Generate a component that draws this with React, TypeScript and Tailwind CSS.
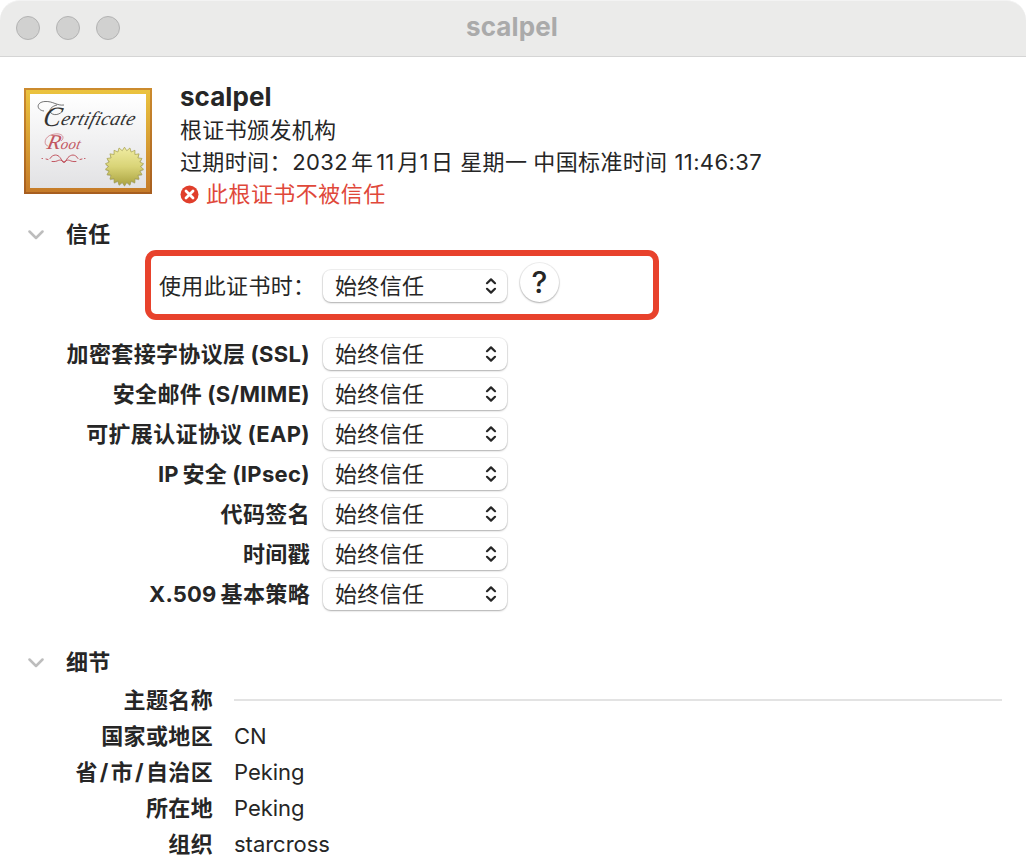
import React from "react";

const policies: { label: React.ReactNode; name: string }[] = [
  { name: "ssl", label: <>加密套接字协议层<Latin>(SSL)</Latin></> },
  { name: "smime", label: <>安全邮件<Latin>(S/MIME)</Latin></> },
  { name: "eap", label: <>可扩展认证协议<Latin>(EAP)</Latin></> },
  { name: "ipsec", label: <><span className="mr-1 tracking-normal">IP</span>安全<Latin>(IPsec)</Latin></> },
  { name: "code", label: "代码签名" },
  { name: "time", label: "时间戳" },
  { name: "x509", label: <><span className="mr-1 tracking-[0.2px]">X.509</span>基本策略</> },
];

const details: { label: React.ReactNode; name: string; value?: string }[] = [
  { name: "subject", label: "主题名称" },
  { name: "country", label: "国家或地区", value: "CN" },
  {
    name: "state",
    label: <>省<span className="mx-[2px]">/</span>市<span className="mx-[2px]">/</span>自治区</>,
    value: "Peking",
  },
  { name: "locality", label: "所在地", value: "Peking" },
  { name: "org", label: "组织", value: "starcross" },
];

function Latin({ children }: { children: React.ReactNode }) {
  return <span className="ml-[5px] tracking-[0.35px]">{children}</span>;
}

function Select() {
  return (
    <div className="flex h-[32px] w-[184px] shrink-0 items-center justify-between rounded-[8px] bg-white pr-[9px] pl-[12px] shadow-[0_0_0_1px_rgba(0,0,0,0.06),0_1px_2px_rgba(0,0,0,0.28)]">
      <span className="leading-[32px]">始终信任</span>
      <svg width="14" height="18" viewBox="0 0 14 18" fill="none" stroke="#262626" strokeWidth="2.2" strokeLinecap="round" strokeLinejoin="round">
        <path d="M3 6.2 7 2.4l4 3.8M3 11.8l4 3.8 4-3.8" />
      </svg>
    </div>
  );
}

function SectionHeader({ title }: { title: string }) {
  return (
    <div className="flex h-8 items-center pl-[28px]">
      <svg className="mt-[2px]" width="16" height="10" viewBox="0 0 16 10" fill="none" stroke="#bdbdbd" strokeWidth="2.5" strokeLinecap="round" strokeLinejoin="round">
        <path d="M1.5 1.5 8 8l6.5-6.5" />
      </svg>
      <h2 className="ml-[22px] font-bold">{title}</h2>
    </div>
  );
}

const sealPoints = Array.from({ length: 44 }, (_, i) => {
  const radius = i % 2 === 0 ? 19.3 : 15.9;
  const angle = (i * Math.PI) / 22 - Math.PI / 2;
  return `${(100.5 + radius * Math.cos(angle)).toFixed(2)},${(78.5 + radius * Math.sin(angle)).toFixed(2)}`;
}).join(" ");

function CertificateIcon() {
  return (
    <svg className="shrink-0" width="128" height="106" viewBox="0 0 128 106">
      <defs>
        <linearGradient id="edge" x1="0" y1="0" x2="0" y2="1">
          <stop offset="0" stopColor="#cc8b2e" />
          <stop offset="1" stopColor="#a75e1f" />
        </linearGradient>
        <linearGradient id="gold" x1="0" y1="0" x2="0" y2="1">
          <stop offset="0" stopColor="#ebc33e" />
          <stop offset="1" stopColor="#c57b29" />
        </linearGradient>
        <linearGradient id="paper" x1="0" y1="0" x2="0" y2="1">
          <stop offset="0" stopColor="#ffffff" />
          <stop offset="1" stopColor="#e2e2e4" />
        </linearGradient>
        <linearGradient id="seal" x1="0" y1="0" x2="0" y2="1">
          <stop offset="0" stopColor="#f0eca2" />
          <stop offset="0.5" stopColor="#d9d477" />
          <stop offset="1" stopColor="#aaa240" />
        </linearGradient>
      </defs>
      <rect width="128" height="106" fill="url(#edge)" />
      <rect x="2" y="2" width="124" height="102" fill="url(#gold)" />
      <rect x="6" y="6" width="116" height="94" fill="url(#paper)" />
      <g fontFamily="Liberation Serif, serif" fontStyle="italic">
        <path d="M20 23C12 22 12 14 21 13.500 29 13 33 18 40 17M39 20c1 5-8 9-12 5-3-3 1-7 6-8" fill="none" stroke="#3a3a3a" strokeWidth=".7" />
        <g fill="#333">
          <text transform="translate(18 37.500) skewX(-12)" fontSize="28" textLength="18" lengthAdjust="spacingAndGlyphs">C</text>
          <text transform="translate(36 36.500) skewX(-16)" fontSize="19.500" textLength="74" lengthAdjust="spacingAndGlyphs">ertificate</text>
        </g>
        <path d="M24 58c-5-1-4-11 7-12 8-1 10 4 6 7" fill="none" stroke="#c25661" strokeWidth=".6" />
        <g fill="#c25661">
          <text transform="translate(22 60.500) skewX(-12)" fontSize="21" textLength="14" lengthAdjust="spacingAndGlyphs">R</text>
          <text transform="translate(36 60.500) skewX(-12)" fontSize="15" textLength="20" lengthAdjust="spacingAndGlyphs">oot</text>
        </g>
      </g>
      <g fill="none" stroke="#c25661" strokeWidth="1" strokeLinecap="round">
        <path d="M26 70.500c3-5 8-4 10-1 2 2 2 5 4 5s2-3 4-5c3-3 7-4 10 1" />
        <path d="M28 73.500c7 1 6-4 12 .5 6-4.500 5 .5 12-.5" />
        <path d="M18 70.500h.5M22 71l2 .5M56 71.500l2-.5M60.500 70.500h.5" />
      </g>
      <polygon points={sealPoints} transform="translate(0 1)" fill="#555522" opacity=".3" />
      <polygon points={sealPoints} fill="url(#seal)" stroke="#a49e4a" strokeWidth=".7" />
    </svg>
  );
}

export default function App() {
  return (
    <div className="h-[864px] w-[1026px] overflow-hidden bg-white font-['Inter','Noto_Sans_CJK_SC',sans-serif] text-[22px] leading-[32px] tracking-[0.35px] whitespace-nowrap text-[#262626]">
      <header className="grid h-[57px] grid-cols-[1fr_auto_1fr] items-center rounded-t-[20px] border-t border-b border-t-[#f3f3f3] border-b-[#d5d5d5] bg-[#ebebea] pb-[2px]">
        <div className="flex gap-4 pl-4">
          <span className="size-6 rounded-full border border-[#b3b3b3] bg-[#d1d1d0]" />
          <span className="size-6 rounded-full border border-[#b3b3b3] bg-[#d1d1d0]" />
          <span className="size-6 rounded-full border border-[#b3b3b3] bg-[#d1d1d0]" />
        </div>
        <h1 className="pr-[2px] pb-[2px] text-[26px] font-bold tracking-[0.1px] text-[#aaa]">scalpel</h1>
      </header>

      <section className="flex pt-[24px] pl-[24px]">
        <div className="pt-[7px]"><CertificateIcon /></div>
        <div className="ml-[28px]">
          <div className="h-[33px] text-[26px] font-bold tracking-[0.05px]">scalpel</div>
          <div>根证书颁发机构</div>
          <div>过期时间：<span className="ml-[0.5px]">2032</span><span className="ml-[3px]">年</span><span className="ml-[3px] tracking-normal">11</span><span className="ml-[3px]">月</span>1<span className="ml-[2px]">日</span><span className="ml-[7px]">星期一</span><span className="ml-[6px]">中国标准时间</span><span className="ml-[7px] tracking-[0.4px]">11:46:37</span></div>
          <div className="flex items-center tracking-[0.45px] text-[#e0483a]">
            <svg className="mt-[1px] mr-[7px]" width="19" height="19" viewBox="0 0 19 19">
              <circle cx="9.500" cy="9.500" r="9" fill="#e03e2b" />
              <path d="m6 6 7 7m0-7-7 7" stroke="white" strokeWidth="2.800" strokeLinecap="round" />
            </svg>
            此根证书不被信任
          </div>
        </div>
      </section>

      <section className="pt-2">
        <SectionHeader title="信任" />
        <div className="ml-[145px] flex h-[70px] w-[514px] items-center rounded-[11px] border-[6px] border-[#e8422c] pl-[8px]">
          <div className="mt-[2px] w-[164px]">使用此证书时：</div>
          <div className="mt-[2px]"><Select /></div>
          <button className="mb-[6px] ml-[13px] flex size-[39px] items-center justify-center rounded-full bg-white text-[30px] font-medium shadow-[0_0_0_1px_rgba(0,0,0,0.06),0_1px_2px_rgba(0,0,0,0.28)]">?</button>
        </div>
        <div className="pt-[14px]">
          {policies.map((policy) => (
            <div key={policy.name} className="flex h-10 items-center">
              <div className="mr-[13px] w-[310px] text-right font-bold">{policy.label}</div>
              <Select />
            </div>
          ))}
        </div>
      </section>

      <section className="pt-8">
        <SectionHeader title="细节" />
        <div className="pt-1">
          {details.map((row) => (
            <div key={row.name} className="flex h-9 items-center">
              <div className="mr-[21px] w-[213px] text-right font-bold">{row.label}</div>
              {row.value ? <div className="tracking-[-0.02px]">{row.value}</div> : <div className="h-[2px] w-[768px] bg-[#e3e3e3]" />}
            </div>
          ))}
        </div>
      </section>
    </div>
  );
}
